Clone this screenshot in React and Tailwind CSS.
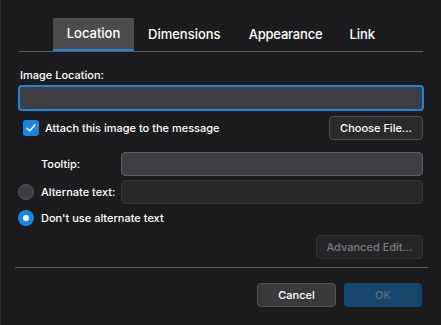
export default function App() {
  return (
    <div
      className="w-[441px] h-[325px] bg-[#1c1c1e] border-l border-[#2e2e30] text-white text-[13px] relative overflow-hidden"
      style={{ fontFamily: "Inter, 'Noto Sans', sans-serif" }}
    >
      {/* Tabs */}
      <div className="pt-[18px] px-[18px]">
        <div className="flex border-b border-[#5b5b5e] h-[34px] pl-[34px] whitespace-nowrap">
          <div className="w-[81px] bg-[#4c4c4f] border-b-2 border-[#1b84de] flex items-center justify-center font-medium">
            Location
          </div>
          <div className="flex items-center pl-[14px] pr-[28px] font-medium">Dimensions</div>
          <div className="flex items-center pr-[27px] font-medium tracking-[-0.2px]">Appearance</div>
          <div className="flex items-center font-medium">Link</div>
        </div>
      </div>

      <div className="px-[17px] whitespace-nowrap text-[11px] font-medium">
        <div className="mt-[15px] ml-[2px] leading-[16px]">Image Location:</div>
        <div className="mt-[2px] h-[26px] rounded-[4px] border-2 border-[#1a86e0] bg-[#3e3e42] w-[406px]"></div>

        <div className="mt-[5px] flex items-center h-[24px] w-[406px]">
          <div className="shrink-0 ml-[5px] w-[16px] h-[16px] rounded-[3px] bg-[#1a86e0] flex items-center justify-center">
            <svg width="12" height="12" viewBox="0 0 12 12" fill="none">
              <path d="M2 6.3 L4.8 9 L10 2.8" stroke="white" strokeWidth="1.4" strokeLinecap="round" strokeLinejoin="round" />
            </svg>
          </div>
          <span className="ml-[6px]">Attach this image to the message</span>
          <div className="shrink-0 ml-auto mr-[1px] w-[94px] h-[24px] rounded-[4px] bg-[#2a2a2c] border border-[#505053] flex items-center justify-center">
            Choose File...
          </div>
        </div>

        <div className="mt-[12px] flex items-center h-[24px] w-[406px]">
          <span className="ml-[23px]">Tooltip:</span>
          <div className="shrink-0 ml-auto mr-[1px] w-[302px] h-[24px] rounded-[4px] bg-[#3e3e42] border border-[#5d5d61]"></div>
        </div>

        <div className="mt-[4px] flex items-center h-[24px] w-[406px]">
          <div className="shrink-0 w-[16px] h-[16px] rounded-full bg-[#3c3c40] border border-[#555558]"></div>
          <span className="ml-[7px]">Alternate text:</span>
          <div className="shrink-0 ml-auto mr-[1px] w-[302px] h-[24px] rounded-[4px] bg-[#28282b] border border-[#38383b]"></div>
        </div>

        <div className="mt-[4px] flex items-center h-[20px]">
          <div className="shrink-0 w-[16px] h-[16px] rounded-full bg-[#1a86e0] flex items-center justify-center">
            <div className="w-[6px] h-[6px] rounded-full bg-white"></div>
          </div>
          <span className="ml-[7px]">Don't use alternate text</span>
        </div>

        <div className="mt-[7px] flex justify-end w-[406px]">
          <div className="mr-[1px] w-[107px] h-[24px] rounded-[4px] bg-[#262628] border border-[#333336] flex items-center justify-center text-[#7b7b7e]">
            Advanced Edit...
          </div>
        </div>
      </div>

      <div className="mt-[8px] ml-[14px] w-[413px] h-px bg-[#5b5b5e]"></div>

      <div className="mt-[15px] flex justify-end gap-[8px] pr-[19px] text-[11px] font-medium">
        <div className="w-[79px] h-[24px] rounded-[4px] bg-[#3a3a3c] border border-[#525255] flex items-center justify-center">
          Cancel
        </div>
        <div className="w-[78px] h-[24px] rounded-[4px] bg-[#16466b] flex items-center justify-center text-[#5d6d7b]">
          OK
        </div>
      </div>
    </div>
  );
}
